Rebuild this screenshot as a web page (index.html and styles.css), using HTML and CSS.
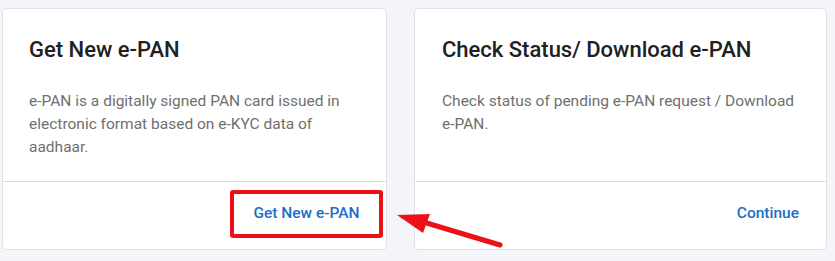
FILE: index.html
```html
<!DOCTYPE html>
<html>
<head>
<meta charset="utf-8">
<link rel="stylesheet" href="styles.css">
</head>
<body>
<div class="page">
  <div class="cards">
    <div class="card card-a">
      <div class="card-body">
        <h2 class="card-title">Get New e-PAN</h2>
        <p class="card-text">e-PAN is a digitally signed PAN card issued in electronic format based on e-KYC data of aadhaar.</p>
      </div>
      <div class="card-footer">
        <a class="card-link highlighted">Get New e-PAN</a>
      </div>
    </div>
    <div class="card card-b">
      <div class="card-body">
        <h2 class="card-title">Check Status/ Download e-PAN</h2>
        <p class="card-text">Check status of pending e-PAN request / Download e&#8209;PAN.</p>
      </div>
      <div class="card-footer">
        <a class="card-link">Continue</a>
      </div>
    </div>
  </div>
  <svg class="arrow" width="120" height="50" viewBox="0 0 120 50">
    <line x1="110" y1="40" x2="30" y2="16" stroke="#ec1117" stroke-width="5" stroke-linecap="round"/>
    <polygon points="7,10 40,9 33,28" fill="#ec1117"/>
  </svg>
</div>
</body>
</html>
```
FILE: styles.css
```css
html, body {
  margin: 0;
  padding: 0;
}
body {
  background: #f4f5f9;
  font-family: Roboto, "Noto Sans", "Liberation Sans", sans-serif;
  width: 835px;
  height: 261px;
  overflow: hidden;
}
.page {
  position: relative;
  width: 835px;
  height: 261px;
}
.cards {
  display: flex;
  gap: 27px;
  padding: 8px 0 0 2px;
}
.card {
  background: #fff;
  border: 1px solid #dfe1e6;
  border-radius: 4px;
  height: 240px;
  display: flex;
  flex-direction: column;
}
.card-a { width: 383px; }
.card-b { width: 411px; }
.card-body {
  padding: 27px 27px 0 26px;
  height: 173px;
  box-sizing: border-box;
  border-bottom: 1px solid #dcdde0;
}
.card-b .card-body {
  padding-left: 27px;
}
.card-title {
  margin: 0;
  font-size: 22px;
  line-height: 28px;
  font-weight: 500;
  color: #202124;
}
.card-text {
  margin: 26px 0 0 0;
  font-size: 15.5px;
  line-height: 23px;
  color: #6f6f6f;
}
.card-footer {
  flex: 1;
  display: flex;
  justify-content: flex-end;
  align-items: center;
  padding: 0 27px 5px 0;
}
.card-link {
  color: #1a6fc4;
  font-size: 15.5px;
  font-weight: 500;
  line-height: 20px;
}
.card-a .card-footer {
  padding: 0 3px 3px 0;
}
.highlighted {
  box-sizing: border-box;
  width: 153px;
  height: 48px;
  border: 4px solid #ec1117;
  border-radius: 3px;
  display: flex;
  align-items: center;
  justify-content: center;
  padding-bottom: 2px;
}
.arrow {
  position: absolute;
  left: 390px;
  top: 205px;
}
```
